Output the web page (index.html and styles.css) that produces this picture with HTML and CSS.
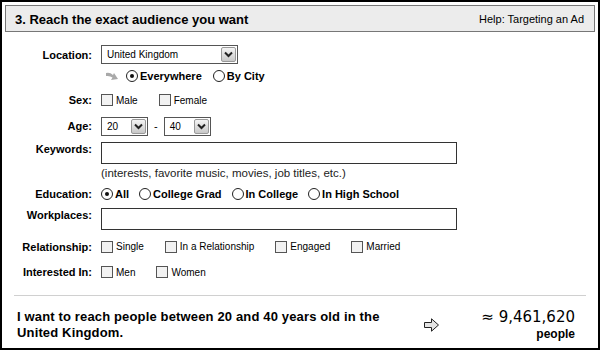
FILE: index.html
```html
<!DOCTYPE html>
<html lang="en">

<head>
  <meta charset="UTF-8" />
  <title>Targeting</title>
  <link rel="stylesheet" href="styles.css">
</head>

<body>
  <div class="panel">
    <div class="head">
      <h2 class="headTitle">3. Reach the exact audience you want</h2>
      <a class="helpLink">Help: Targeting an Ad</a>
    </div>

    <div class="targetForm">
      <div class="row rowLocation">
        <label class="label">Location:</label>
        <div class="field">
          <span class="select selectWide">
            <span class="selectText">United Kingdom</span>
            <span class="selectBtn"><svg width="9" height="7" viewBox="0 0 9 7"><path d="M1 1.5 L4.5 5 L8 1.5" fill="none" stroke="#222" stroke-width="2"/></svg></span>
          </span>
        </div>
      </div>

      <div class="row rowScope">
        <span class="label"></span>
        <div class="field options optionsBold scopeOptions">
          <svg class="turnArrow" width="13" height="11" viewBox="0 0 13 11">
            <path d="M0 2 Q4 1 7 4 L8 2 L12 8 L5 9 L6.5 6.5 Q4 4.5 0 5 Z" fill="#a9a9a9"/>
          </svg>
          <span class="option"><span class="radio on"></span>Everywhere</span>
          <span class="option"><span class="radio"></span>By City</span>
        </div>
      </div>

      <div class="row rowSex">
        <label class="label">Sex:</label>
        <div class="field options">
          <span class="option"><span class="check"></span>Male</span>
          <span class="option"><span class="check"></span>Female</span>
        </div>
      </div>

      <div class="row rowAge">
        <label class="label">Age:</label>
        <div class="field">
          <span class="select selectSmall">
            <span class="selectText">20</span>
            <span class="selectBtn"><svg width="9" height="7" viewBox="0 0 9 7"><path d="M1 1.5 L4.5 5 L8 1.5" fill="none" stroke="#222" stroke-width="2"/></svg></span>
          </span>
          <span class="dash">-</span>
          <span class="select selectSmall">
            <span class="selectText">40</span>
            <span class="selectBtn"><svg width="9" height="7" viewBox="0 0 9 7"><path d="M1 1.5 L4.5 5 L8 1.5" fill="none" stroke="#222" stroke-width="2"/></svg></span>
          </span>
        </div>
      </div>

      <div class="row rowInput">
        <label class="label">Keywords:</label>
        <div class="field"><span class="textInput"></span></div>
      </div>

      <div class="row rowHint">
        <span class="label"></span>
        <div class="field hint">(interests, favorite music, movies, job titles, etc.)</div>
      </div>

      <div class="row rowEdu">
        <label class="label">Education:</label>
        <div class="field options optionsBold eduOptions">
          <span class="option"><span class="radio on"></span>All</span>
          <span class="option"><span class="radio"></span>College Grad</span>
          <span class="option"><span class="radio"></span>In College</span>
          <span class="option"><span class="radio"></span>In High School</span>
        </div>
      </div>

      <div class="row rowInput rowWork">
        <label class="label">Workplaces:</label>
        <div class="field"><span class="textInput"></span></div>
      </div>

      <div class="row rowRel">
        <label class="label">Relationship:</label>
        <div class="field options">
          <span class="option"><span class="check"></span>Single</span>
          <span class="option"><span class="check"></span>In a Relationship</span>
          <span class="option"><span class="check"></span>Engaged</span>
          <span class="option"><span class="check"></span>Married</span>
        </div>
      </div>

      <div class="row rowInterest">
        <label class="label">Interested In:</label>
        <div class="field options">
          <span class="option"><span class="check"></span>Men</span>
          <span class="option"><span class="check"></span>Women</span>
        </div>
      </div>
    </div>

    <div class="summary">
      <p class="summaryText">I want to reach people between 20 and 40 years old in the United Kingdom.</p>
      <svg class="goArrow" width="16" height="14" viewBox="0 0 16 14">
        <path d="M0.5 4.5 H7.5 V0.8 L14.5 7 L7.5 13.2 V9.5 H0.5 Z" fill="#e4e4e4" stroke="#222" stroke-width="1"/>
      </svg>
      <div class="count">
        <span class="countNum">&asymp; 9,461,620</span>
        <span class="countUnit">people</span>
      </div>
    </div>
  </div>
</body>

</html>
```

FILE: styles.css
```css
body {
  margin: 0;
  font-family: "Liberation Sans", Arial, sans-serif;
  font-size: 11px;
  color: #000;
  background-color: #fff;
}

.panel {
  width: 600px;
  height: 350px;
  box-sizing: border-box;
  border: 2px solid #000;
  padding: 3px 3px 0 3px;
}

.head {
  display: flex;
  justify-content: space-between;
  align-items: center;
  height: 27px;
  box-sizing: border-box;
  border: 1px solid #777;
  background-color: #ececec;
  padding: 1px 10px 0 9px;
}

.headTitle {
  margin: 0;
  font-size: 13px;
  font-weight: bold;
}

.helpLink {
  font-size: 11px;
  color: #000;
}

.targetForm {
  margin-top: 13px;
  margin-left: -3px;
}

.row {
  display: grid;
  grid-template-columns: 90px 1fr;
  column-gap: 9px;
  align-items: center;
}

.label {
  text-align: right;
  font-size: 11px;
  font-weight: bold;
}

.field {
  display: flex;
  align-items: center;
  font-size: 10px;
}

.rowLocation {
  height: 19px;
}

.rowScope {
  height: 24px;
}

.rowSex {
  height: 24px;
}

.rowAge {
  height: 28px;
}

.rowInput {
  align-items: start;
  margin-top: 2px;
  height: 22px;
}

.rowInput .label {
  line-height: 14px;
}

.rowWork {
  margin-top: 3px;
}

.rowHint {
  height: 18px;
}

.rowEdu {
  height: 22px;
  padding-top: 1px;
}

.rowRel {
  height: 33px;
}

.rowInterest {
  height: 18px;
}

.select {
  display: inline-flex;
  align-items: center;
  justify-content: space-between;
  height: 19px;
  box-sizing: border-box;
  border: 1px solid #555;
  background-color: #fff;
  padding: 0 1px 0 5px;
}

.selectWide {
  width: 137px;
}

.selectSmall {
  width: 47px;
}

.selectBtn {
  display: inline-flex;
  align-items: center;
  justify-content: center;
  width: 15px;
  height: 15px;
  box-sizing: border-box;
  border: 1px solid #999;
  border-radius: 2px;
  background: linear-gradient(#f4f4f4, #c8c8c8);
}

.dash {
  margin: 0 6px;
  font-size: 11px;
}

.textInput {
  display: block;
  width: 356px;
  height: 22px;
  box-sizing: border-box;
  border: 1px solid #333;
  background-color: #fff;
}

.hint {
  color: #222;
  font-size: 11.5px;
}

.options {
  gap: 21px;
}

.optionsBold {
  font-size: 11px;
  font-weight: bold;
}

.scopeOptions {
  gap: 11px;
  padding-left: 5px;
}

.eduOptions {
  gap: 10px;
}

.option {
  display: inline-flex;
  align-items: center;
}

.turnArrow {
  margin-right: -4px;
}

.radio {
  position: relative;
  width: 12px;
  height: 12px;
  box-sizing: border-box;
  border: 1px solid #222;
  border-radius: 50%;
  background-color: #fff;
  margin-right: 2px;
}

.radio.on::after {
  content: "";
  position: absolute;
  left: 3px;
  top: 3px;
  width: 4px;
  height: 4px;
  border-radius: 50%;
  background-color: #111;
}

.check {
  width: 12px;
  height: 12px;
  box-sizing: border-box;
  border: 1px solid #555;
  background-color: #f2f2f2;
  margin-right: 3px;
}

.summary {
  display: flex;
  align-items: flex-start;
  margin: 14px 9px 0 9px;
  padding-top: 13px;
  border-top: 1px solid #d0d0d0;
}

.summaryText {
  margin: 0 0 0 3px;
  width: 380px;
  font-size: 13px;
  letter-spacing: 0.15px;
  font-weight: bold;
  line-height: 16px;
}

.goArrow {
  margin: 9px 0 0 27px;
}

.count {
  display: flex;
  flex-direction: column;
  align-items: flex-end;
  margin-left: auto;
  margin-right: 11px;
}

.countNum {
  font-family: "DejaVu Sans", sans-serif;
  font-size: 15px;
  line-height: 17px;
}

.countUnit {
  font-size: 12px;
  font-weight: bold;
  line-height: 16px;
}
```
